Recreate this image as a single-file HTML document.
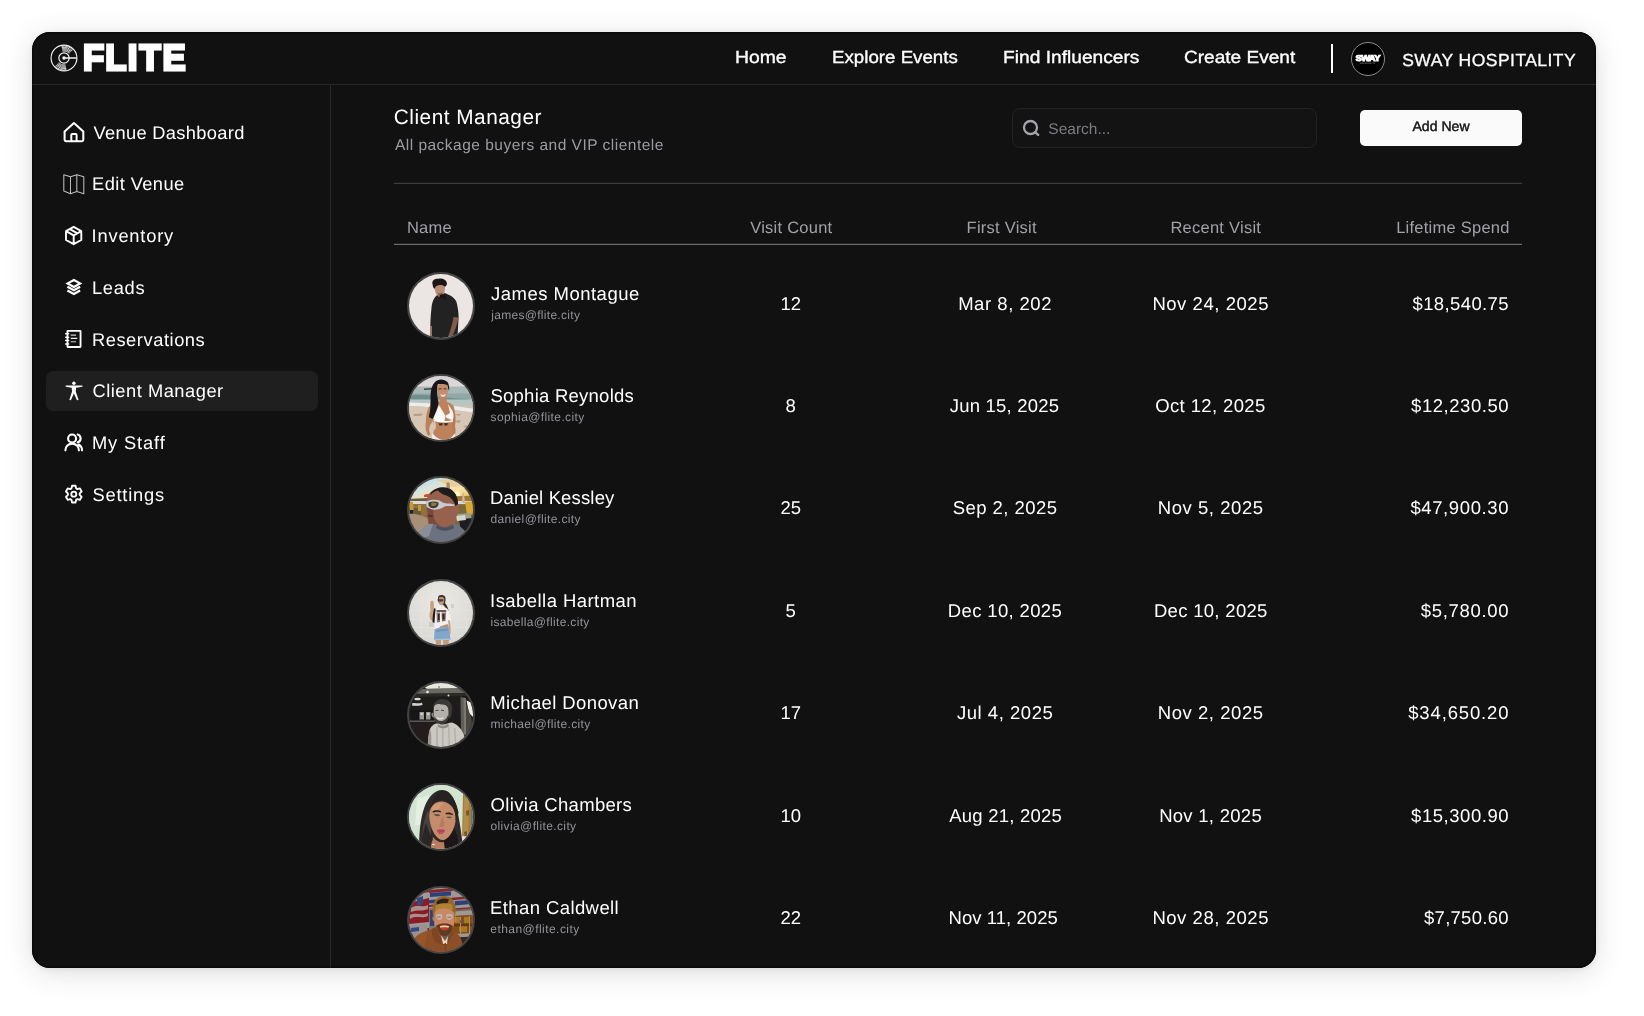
<!DOCTYPE html>
<html lang="en">
<head>
<meta charset="utf-8">
<title>FLITE - Client Manager</title>
<style>
*{box-sizing:border-box;margin:0;padding:0}
html,body{width:1644px;height:1016px;background:#fff;overflow:hidden}
body{font-family:"Liberation Sans",sans-serif;color:#fff;position:relative;text-rendering:geometricPrecision}
.card{will-change:transform;position:absolute;left:32px;top:32px;width:1564px;height:936px;background:#111111;border-radius:18px;box-shadow:0 0 0 1.5px #0a0a0a inset,0 5px 30px rgba(0,0,0,.13),0 1px 7px rgba(0,0,0,.09);overflow:hidden}
.abs{position:absolute;white-space:nowrap}
.hdr{position:absolute;left:0;top:0;width:1564px;height:53px;border-bottom:1px solid #262626}
.nav{position:absolute;top:13.24px;font-size:17.5px;line-height:24px;transform-origin:0 50%;-webkit-text-stroke:.35px #fff;white-space:nowrap}
.vdiv{position:absolute;left:1299px;top:12px;width:2px;height:28.5px;background:#fff}
.orglogo{position:absolute;left:1318.9px;top:9.8px;width:34.3px;height:34.3px;border-radius:50%;background:#000;border:1px solid #8c8c8c;overflow:hidden}
.org{position:absolute;left:1370.2px;top:16.1px;font-size:17.5px;line-height:24px;white-space:nowrap;letter-spacing:.46px;-webkit-text-stroke:.3px #fff}
.side{position:absolute;left:0;top:53px;width:299px;height:883px;border-right:1px solid #282828}
.item{position:absolute;left:13.5px;width:272.5px;height:40.3px;border-radius:7px}
.item.on{background:#1f1f1f}
.item svg{position:absolute;left:16.2px;top:8.15px;width:24px;height:24px}
.item span{position:absolute;left:47.5px;top:8px;font-size:18.3px;line-height:24px;letter-spacing:.45px;white-space:nowrap}
.title{left:361.85px;top:73px;font-size:20.8px;line-height:26px;letter-spacing:.5px}
.sub{left:362.9px;top:104px;font-size:15.5px;line-height:20px;color:#9b9ba3;letter-spacing:.49px}
.rule{position:absolute;left:362px;width:1128px;height:1px}
.r1{top:151px;background:#3c3c3c;box-shadow:0 -1px 0 #1b1b1b}
.r2{top:212px;background:#6a6a6f;box-shadow:0 -1px 0 #262626}
.search{position:absolute;left:979.5px;top:76px;width:305.5px;height:40px;border:1px solid #232323;border-radius:8px;background:#131313}
.search svg{position:absolute;left:8.8px;top:8.9px;width:19px;height:19px}
.search span{position:absolute;left:35.85px;top:11px;font-size:15.5px;line-height:20px;color:#7b7b83;letter-spacing:0}
.btn{position:absolute;left:1328px;top:78px;width:162px;height:36px;border-radius:5px;background:#fafafa;color:#111;text-align:center;font-size:14px;line-height:33.3px;letter-spacing:.05px;-webkit-text-stroke:.45px #111}
.th{top:186px;font-size:16.5px;line-height:20px;color:#a1a1a9;letter-spacing:.25px}
.thc{width:200px;text-align:center}
.row{position:absolute;left:362px;width:1128px;height:102px}
.av{position:absolute;left:13.2px;top:17px;width:68px;height:68px;border-radius:50%;border:2px solid #444;overflow:hidden;background:#333}
.av svg{display:block;width:64px;height:64px}
.nm{left:96.7px;top:26.5px;font-size:18.5px;line-height:24px;letter-spacing:.48px}
.em{left:96.3px;top:51.7px;font-size:12px;line-height:16px;color:#93939b;letter-spacing:.38px}
.c{top:37.1px;font-size:18.5px;line-height:24px;text-align:center}
.c1{left:336.7px;width:120px}
.cl{text-align:left}

</style>
</head>
<body>
<div class="card">
  <div class="hdr">
    <svg class="abs" style="left:16.65px;top:11.05px" width="30" height="30" viewBox="0 0 30 30" fill="none" stroke="#f2f2f2">
      <circle cx="15" cy="15" r="12.9" stroke-width="1.15"/>
      <circle cx="15" cy="15" r="5.15" stroke-width="1.25"/>
      <circle cx="15" cy="15" r="1.75" fill="#fff" stroke="none"/>
      <path d="M15 15H27.9" stroke-width="1.7"/>
      <path stroke-width=".82" stroke="#fff" d="M13.52 8.06A7.1 7.1 0 0 1 20.28 10.25M16.48 21.94A7.1 7.1 0 0 1 9.72 19.75M13.27 6.88A8.3 8.3 0 0 1 21.17 9.45M16.73 23.12A8.3 8.3 0 0 1 8.83 20.55M13.02 5.71A9.5 9.5 0 0 1 22.06 8.64M16.98 24.29A9.5 9.5 0 0 1 7.94 21.36M12.78 4.53A10.7 10.7 0 0 1 22.95 7.84M17.22 25.47A10.7 10.7 0 0 1 7.05 22.16M12.53 3.36A11.9 11.9 0 0 1 23.84 7.04M17.47 26.64A11.9 11.9 0 0 1 6.16 22.96"/>
    </svg>
    <svg class="abs" style="left:48px;top:6px" width="112" height="40" viewBox="0 0 112 40">
      <text text-rendering="geometricPrecision" transform="scale(.99,1.045)" x="3 25.53 48.15 60 83.4" y="30.81" font-family="'Liberation Sans',sans-serif" font-weight="700" font-size="35" fill="#fff" stroke="#fff" stroke-width="2.8" stroke-linejoin="miter">FLITE</text>
    </svg>
    <div class="nav" style="left:703.4px;transform:scaleX(1.106)">Home</div>
    <div class="nav" style="left:800.4px;transform:scaleX(1.069)">Explore Events</div>
    <div class="nav" style="left:971.2px;transform:scaleX(1.096)">Find Influencers</div>
    <div class="nav" style="left:1152.2px;transform:scaleX(1.089)">Create Event</div>
    <div class="vdiv"></div>
    <div class="orglogo"><svg viewBox="0 0 34 34" width="32.3" height="32.3" style="display:block"><text text-rendering="geometricPrecision" transform="scale(1.13,1)" x="14.6" y="19.3" text-anchor="middle" font-family="'Liberation Sans',sans-serif" font-weight="700" font-size="8.800" fill="#fff" stroke="#fff" stroke-width=".95" letter-spacing="-.6">SWAY</text><text x="16.500" y="21.900" text-anchor="middle" font-family="'Liberation Sans',sans-serif" font-weight="700" font-size="2.200" fill="#8a8a8a" letter-spacing=".2">HOSPITALITY</text></svg></div>
    <div class="org">SWAY HOSPITALITY</div>
  </div>
  <div class="side">
    <div class="item" style="top:26.95px"><svg viewBox="0 0 24 24" fill="none" stroke="#fff" stroke-linecap="round" stroke-linejoin="round"><path stroke-width="2.05" d="M2.6 11.55L11.95 3.05L21.3 11.55V19.7a1.45 1.45 0 0 1-1.45 1.45H4.05a1.45 1.45 0 0 1-1.45-1.45Z"/><path stroke-width="2" stroke-linecap="butt" d="M9.3 21.1V15.1a1 1 0 0 1 1-1h3.3a1 1 0 0 1 1 1V21.1"/></svg><span style="top:9.05px;left:48.02px;letter-spacing:0.317px">Venue Dashboard</span></div>
    <div class="item" style="top:78.75px"><svg viewBox="0 0 24 24" fill="none" stroke="#fff" stroke-linecap="round" stroke-linejoin="round"><path stroke="#bdbdbd" stroke-width="1.05" d="M1.8 2.7L8.5 4.8L14.8 2.7L21.8 4.8L21.8 21.8L14.8 19.5L8.5 21.7L1.8 19.0ZM8.5 4.8V21.7M14.8 2.7V19.5"/></svg><span style="top:8.25px;left:46.6px;letter-spacing:0.398px">Edit Venue</span></div>
    <div class="item" style="top:130.45px"><svg viewBox="0 0 24 24" fill="none" stroke="#fff" stroke-linecap="round" stroke-linejoin="round"><path stroke-width="1.9" d="M11.7 2.95L19.3 7.2V16.0L11.7 20.2L4.0 16.0V7.2Z M4.0 7.2L11.7 11.45L19.3 7.2 M11.7 11.45V20.2 M7.85 5.08L15.5 9.32"/></svg><span style="top:8.55px;left:46.11px;letter-spacing:0.794px">Inventory</span></div>
    <div class="item" style="top:182.25px"><svg viewBox="0 0 24 24" fill="none" stroke="#fff" stroke-linecap="round" stroke-linejoin="round"><path stroke-width="2.2" stroke-linejoin="miter" stroke-linecap="butt" d="M11.9 5.0L18.1 8.4L11.9 11.9L5.6 8.4ZM5.4 11.7L11.9 15.2L18.1 11.7M5.4 15.5L11.9 19.0L18.1 15.5"/></svg><span style="top:8.75px;left:46.4px;letter-spacing:0.726px">Leads</span></div>
    <div class="item" style="top:233.95px"><svg viewBox="0 0 24 24" fill="none" stroke="#fff" stroke-linecap="round" stroke-linejoin="round"><rect x="5.45" y="3.8499999999999996" width="13.1" height="16.1" rx=".35" stroke-width="1.85"/><path stroke-width="1.5" d="M3.7 6.85H6.6M3.7 10.2H6.6M3.7 13.6H6.6M3.7 16.95H6.6"/><path stroke-width="1.15" stroke="#cfcfcf" stroke-linecap="butt" d="M8.7 8.1H14.1M8.7 14.75H14.1"/><path stroke-width="1.15" stroke="#fff" stroke-linecap="butt" d="M8.7 11.350000000000001H15.3"/></svg><span style="top:9.05px;left:46.4px;letter-spacing:0.56px">Reservations</span></div>
    <div class="item on" style="top:285.75px"><svg viewBox="0 0 24 24" fill="none" stroke="#fff" stroke-linecap="round" stroke-linejoin="round"><circle cx="11.9" cy="4.3" r="1.7" fill="#fff" stroke="none"/><path fill="#fff" stroke="none" d="M3.7 6.45L20.4 6.45L20.4 7.8L14.1 8.65L13.75 12.6L16.6 21.0L15.0 21.3L11.9 14.6L8.9 21.3L7.3 21.0L10.05 12.6L9.7 8.65L3.7 7.8Z"/></svg><span style="top:8.25px;left:46.97px;letter-spacing:0.518px">Client Manager</span></div>
    <div class="item" style="top:337.45px"><svg viewBox="0 0 24 24" fill="none" stroke="#fff" stroke-linecap="round" stroke-linejoin="round"><circle cx="10.1" cy="7.45" r="4" stroke-width="2.1"/><path stroke-width="2.1" d="M3.4 19.35A6.75 6.75 0 0 1 16.9 19.35M15.64 3.59A4 4 0 0 1 15.64 11.31M16.6 13.5A6.75 6.75 0 0 1 20.0 19.35"/></svg><span style="top:8.55px;left:46.4px;letter-spacing:0.88px">My Staff</span></div>
    <div class="item" style="top:389.25px"><svg viewBox="0 0 24 24" fill="none" stroke="#fff" stroke-linecap="round" stroke-linejoin="round"><path stroke-width="1.9" d="M14.13 6.4L13.51 3.74L10.09 3.74L9.47 6.4L8.21 7.16L5.7 6.4L3.99 9.49L5.88 11.39L5.88 12.91L3.99 14.81L5.7 17.9L8.21 17.14L9.47 17.9L10.09 20.56L13.51 20.56L14.13 17.9L15.39 17.14L17.9 17.9L19.61 14.81L17.72 12.91L17.72 11.39L19.61 9.49L17.9 6.4L15.39 7.16Z"/><circle cx="11.8" cy="12.15" r="2.5" stroke-width="1.9"/></svg><span style="top:8.75px;left:47.07px;letter-spacing:0.781px">Settings</span></div>
  </div>
  <div class="abs title">Client Manager</div>
  <div class="abs sub">All package buyers and VIP clientele</div>
  <div class="search"><svg viewBox="0 0 19 19" fill="none" stroke="#a4a4ae" stroke-linecap="round"><circle cx="9.5" cy="9.5" r="6.5" stroke-width="2.3"/><path stroke-width="2.3" d="M14.3 14.3L17.2 16.9"/></svg><span>Search...</span></div>
  <div class="btn">Add New</div>
  <div class="rule r1"></div>
  <div class="abs th" style="left:374.95px">Name</div>
  <div class="abs th thc" style="left:659.3px">Visit Count</div>
  <div class="abs th thc" style="left:869.7px">First Visit</div>
  <div class="abs th thc" style="left:1083.8px">Recent Visit</div>
  <div class="abs th" style="right:86.3px;text-align:right">Lifetime Spend</div>
  <div class="rule r2"></div>
  <div class="row" style="top:222.65px">
    <div class="av"><svg viewBox="0 0 64 64"><defs><filter id="b1" x="-10%" y="-10%" width="120%" height="120%"><feGaussianBlur stdDeviation=".55"/></filter></defs>
<rect width="64" height="64" fill="#ebe5e3"/>
<g filter="url(#b1)">
<path d="M21.5 64C21 52 21.5 42 22.5 34C23 28 25 23 29 20.5L33 18.5L37 19.5C41 21 46 24 47.5 28C49 34 49.8 40 49.6 43L48.8 58L48 64Z" fill="#222222"/>
<path d="M44.5 43L49.4 43.5C48.6 50 46 56 43 63L39 63C41.5 56 43.5 50 44.5 43Z" fill="#7d5c4a"/>
<path d="M21 52L23 52L23 62L21 62Z" fill="#9a7560"/>
<path d="M25.5 9.5C25 15 26.5 20.5 29.5 22.5C31.5 23.5 34 22 35 19.5C36 17 36.3 13 35.5 9Z" fill="#b88c76"/>
<path d="M28.5 18.5C30 19.5 32 19.3 33.3 18.3L33.5 21L29.5 22.3Z" fill="#8a5f4e"/>
<path d="M23.5 10C22.5 6.5 26 4.2 29.5 4.8C32.5 3.8 36.5 5 37.6 8C38.6 10.5 37 12.8 35.5 12.5C33 10.5 29.5 10.8 27 12.2C26 13.5 25.5 15.5 25 14.5C24 13.5 23.8 11.5 23.5 10Z" fill="#1d1613"/>
<path d="M31 21L33.5 20L37 21.5L36.5 26L33 23.5L30 25Z" fill="#171717"/>
</g></svg></div>
    <div class="abs nm" style="top:27.35px;left:97.01px;letter-spacing:0.485px">James Montague</div><div class="abs em" style="top:52.35px;left:97.19px;letter-spacing:0.302px">james@flite.city</div>
    <div class="abs c c1" style="top:37.35px">12</div><div class="abs c cl" style="top:37.35px;left:564.18px;letter-spacing:0.535px">Mar 8, 202</div><div class="abs c cl" style="top:37.35px;left:758.38px;letter-spacing:0.549px">Nov 24, 2025</div><div class="abs c cl" style="top:37.35px;left:1018.5px;letter-spacing:0.387px">$18,540.75</div>
  </div>
  <div class="row" style="top:325.0px">
    <div class="av"><svg viewBox="0 0 64 64"><defs><filter id="b2" x="-10%" y="-10%" width="120%" height="120%"><feGaussianBlur stdDeviation=".6"/></filter>
<linearGradient id="s2" x1="0" y1="0" x2="0" y2="1"><stop offset="0" stop-color="#cfd0d4"/><stop offset="1" stop-color="#e3d9d8"/></linearGradient></defs>
<rect width="64" height="64" fill="#d3c3b0"/>
<g filter="url(#b2)">
<rect x="-2" y="-2" width="68" height="13" fill="url(#s2)"/>
<rect x="-2" y="10.5" width="68" height="9" fill="#a9b8b8"/>
<rect x="-2" y="17.5" width="68" height="7" fill="#90a8a6"/>
<path d="M-2 19.5C12 17.5 22 20 32 21C44 22.5 54 22 66 25L66 27.5L-2 23.5Z" fill="#6f8f8c"/>
<rect x="-2" y="23.5" width="68" height="6" fill="#b5c6c5"/>
<path d="M-2 26.5C15 26 40 29 66 33L66 37C40 33 15 30 -2 30Z" fill="#e9eeed"/>
<path d="M-2 30C15 30 40 33 66 37L66 66L-2 66Z" fill="#d6c6b3"/>
<path d="M15 12.5L23 12L23 13.5L15 14Z" fill="#3a4544"/>
<path d="M4 38L14 37.5L12 40L5 40ZM44 45L52 44L50 47ZM54 50L60 49L58 52ZM46 38L52 38L50 40Z" fill="#b59f88"/>
<path d="M26 6C29 2.5 35 2.5 38.5 6C40 8 40.5 12 40 15L38 9L29 8C27.5 14 28 22 30 27C28.5 33 27 38 23 43L19.5 41C22 34 22 26 21.5 20C21.5 14 23 9 26 6Z" fill="#16161a"/>
<path d="M28.5 9C31 7.5 36 7.5 38.5 9.5C39.5 13 39 18 37 21C35.5 23 32.5 23.2 30.5 21.5C28.5 18.5 27.8 13 28.5 9Z" fill="#c48c6c"/>
<path d="M29.5 12.5L32.5 12.2L32.5 13.2L29.5 13.5ZM34.5 12.2L37.5 12.6L37.5 13.6L34.5 13.2Z" fill="#4a342c"/>
<path d="M31.5 18.3C33 19.4 35.5 19.1 36.8 17.8L36 20.1C34.8 20.8 33 20.8 32 20.1Z" fill="#f2e6e0"/>
<path d="M30.5 22L37 21L38 26C41 27 44 28.5 45 31C46 35 45.5 40 44.5 44C44.5 48 45 52 45.5 56L46.5 64L23 64L24.5 56C25.5 52 25 48 24 45C20 50 19 54 21.5 58L19.5 60C16.5 56 16 50 17 45C17 38 18.5 32 22 28.5C24.5 26.5 27.5 26.5 30.5 25.5Z" fill="#bd815c"/>
<path d="M44.5 33C47 37 47 44 46 50C47 54 46.5 58 45.5 60L43.5 58C44 52 43 46 43.5 40Z" fill="#b87a56"/>
<path d="M22 18C21.5 26 22 34 19.8 41L23.5 43C26.5 38 28.5 32 29.5 27C28 24 27 20 27.5 16Z" fill="#16161a"/>
<path d="M30 29C28 34 25.5 39 24.5 43C27 45.5 31.5 46 35.5 45L36.5 40Z" fill="#f8f8f8"/>
<path d="M39 28L43.5 35C45 38 44.8 42 43.5 44.5L37 41.5L36.8 39.5L41 37Z" fill="#f4f4f4"/>
<path d="M24.5 43.3C29 45.3 39 45.8 44 44L44 45.5C39 47.3 29 46.8 24.5 44.8Z" fill="#ffffff"/>
<path d="M29.5 47.5L33.8 47L33.2 49.5L30.5 49.5ZM35.2 47L39.5 47.3L38 49.5L35.5 49.5Z" fill="#3d2f2a"/>
<path d="M23.5 57C26 61 30 63 34 64.5L22.5 64.5ZM45.5 57C44 61 40 63 37 64.5L47 64.5Z" fill="#f1ecec"/>
<path d="M25 44C24 47 24.5 51 25.5 55C28 50 27 47 25 44Z" fill="#d6c6b3"/>
</g></svg></div>
    <div class="abs nm" style="top:27.0px;left:96.46px;letter-spacing:0.246px">Sophia Reynolds</div><div class="abs em" style="top:52.0px;left:96.57px;letter-spacing:0.385px">sophia@flite.city</div>
    <div class="abs c c1" style="top:37.0px">8</div><div class="abs c cl" style="top:37.0px;left:555.76px;letter-spacing:0.221px">Jun 15, 2025</div><div class="abs c cl" style="top:37.0px;left:761.22px;letter-spacing:0.375px">Oct 12, 2025</div><div class="abs c cl" style="top:37.0px;left:1017.1px;letter-spacing:0.537px">$12,230.50</div>
  </div>
  <div class="row" style="top:427.35px">
    <div class="av"><svg viewBox="0 0 64 64"><defs><filter id="b3" x="-10%" y="-10%" width="120%" height="120%"><feGaussianBlur stdDeviation=".7"/></filter>
<linearGradient id="s3" x1="0" y1="0" x2="1" y2=".9"><stop offset="0" stop-color="#9fc6e2"/><stop offset=".4" stop-color="#d6e4e2"/><stop offset=".7" stop-color="#f8e2a6"/><stop offset="1" stop-color="#f5bd58"/></linearGradient></defs>
<rect width="64" height="64" fill="#8a6a48"/>
<g filter="url(#b3)">
<rect x="-2" y="-2" width="68" height="24" fill="url(#s3)"/>
<path d="M28 2L40 1L46 4L52 8L44 9L36 6Z" fill="#e9c98a" opacity=".8"/>
<circle cx="48" cy="16.5" r="3.2" fill="#fff3c8"/>
<path d="M-2 21L20 20L40 19L66 18L66 24L-2 25Z" fill="#6b5a3a"/>
<path d="M44 18.5L66 17.5L66 23L44 23Z" fill="#a07a35"/>
<rect x="-2" y="23" width="68" height="4" fill="#d9d9e0"/>
<rect x="-2" y="26" width="68" height="12" fill="#8f7240"/>
<path d="M-2 30L12 30L12 46L-2 46Z" fill="#6a5a3c"/>
<path d="M1 24L4 24L5 36L1 36ZM9 27L12 27L12 33L9 33Z" fill="#c79a2e"/>
<path d="M1 32L4.5 32L4.5 37L1 37Z" fill="#1f2230"/>
<path d="M-2 36C8 35 14 38 22 42L18 52L-2 56Z" fill="#a89078"/>
<path d="M46 28L66 26L66 50L46 46Z" fill="#7a6a3a"/>
<path d="M56 24L66 23L66 36L58 37Z" fill="#d9a830"/>
<path d="M48 36L62 35L62 42L48 43Z" fill="#9aa08a"/>
<path d="M50 41L66 40L66 56L52 54Z" fill="#1c1d22"/>
<path d="M47 38L56 37L57 42L48 43Z" fill="#d8d4cc"/>
<path d="M37.5 4.5L40.5 4.5L41 11L37.5 11Z" fill="#a08868"/>
<path d="M53.5 15L55 15L56 25L53 25Z" fill="#c9b9a0"/>
<path d="M15 17C17 15.5 20 15.5 21 17L20 19L15 19Z" fill="#e0483a"/>
<path d="M20 16C24 10.5 32 8.5 39 10.5C45 12.5 48.5 18 49 25C49.5 31 48 37 46.5 42C45.5 46 44.5 49 44 52L26 54C22 52 20 49 19.5 45L17.5 36C16.5 34 16.5 31 17.5 29C17 24 18 19 20 16Z" fill="#96624d"/>
<path d="M18 30C19 28 22 28 24 30L25 40C26 44 30 48 35 50L44 46L44 54L27 55C22 52 20 48 19.5 44Z" fill="#7a4c3c"/>
<path d="M46 27C49 26 50.5 29 50 33C49.5 36 48 38.5 46 38Z" fill="#9a6450"/>
<path d="M21.5 15C26 9.5 34 8 40 10.5C46 13 49 19 49 26L46.5 28C45 23 42 19 37.5 17.5C34 17 31.5 15 29 12.5C26 13 23.5 14.5 21.5 17Z" fill="#1f1a1c"/>
<path d="M17 23.5C21 21.5 27 21 30.5 22.5C33 25 37 25.5 41 25.5L45.5 26.5L45.5 28L37 28C34 29 31 31.5 28 31.5C24 32 19.5 31 17.5 28.5Z" fill="#c9c9cf"/>
<path d="M19.5 24.5C22.5 23 27 23 29.5 24.5C30 27 28.5 29.5 26 30C23 30.5 20.5 29.5 19.5 27.5Z" fill="#3b3a30"/>
<path d="M22 25C24 24.3 26.5 24.5 28 25.5L26 28L22.5 28Z" fill="#8a7a3a"/>
<path d="M18.5 36.5L23 37L24.5 39L19 39Z" fill="#5a3328"/>
<path d="M12 52C18 46 26 44.5 30 48C34 50 40 50 45 45.5C50 47 56 52 60 58L60 66L4 66Z" fill="#6c7280"/>
<path d="M28 47C31 49.5 38 50.5 44 47L45 50C39 54 31 53 27 50Z" fill="#4c515e"/>
<path d="M10 54C14 48 20 45 24 46L20 58L8 62Z" fill="#8a8e9a"/>
</g></svg></div>
    <div class="abs nm" style="top:26.65px;left:95.98px;letter-spacing:0.153px">Daniel Kessley</div><div class="abs em" style="top:51.65px;left:96.4px;letter-spacing:0.369px">daniel@flite.city</div>
    <div class="abs c c1" style="top:36.65px">25</div><div class="abs c cl" style="top:36.65px;left:558.76px;letter-spacing:0.454px">Sep 2, 2025</div><div class="abs c cl" style="top:36.65px;left:763.78px;letter-spacing:0.553px">Nov 5, 2025</div><div class="abs c cl" style="top:36.65px;left:1016.4px;letter-spacing:0.615px">$47,900.30</div>
  </div>
  <div class="row" style="top:529.7px">
    <div class="av"><svg viewBox="0 0 64 64"><defs><filter id="b4" x="-10%" y="-10%" width="120%" height="120%"><feGaussianBlur stdDeviation=".5"/></filter>
<radialGradient id="g4" cx=".5" cy=".35" r=".75"><stop offset="0" stop-color="#eceae6"/><stop offset="1" stop-color="#d6d4cf"/></radialGradient></defs>
<rect width="64" height="64" fill="url(#g4)"/>
<g filter="url(#b4)">
<path d="M0 12.5H64M0 21H64M0 29.500H64M0 38H64M0 46.500H64M0 55H64M12 0V64M38.500 0V64M57 0V64M25 0V64" stroke="#e6e4e0" stroke-width=".7" fill="none" opacity=".9"/>
<path d="M42 23L45 23L45 27L42 27Z" fill="#d2d0cb"/>
<path d="M20 41L25 41L25 46L20 46Z" fill="#cfcdc8"/>
<path d="M29.500 15C31 13.500 34.500 13.500 36 15.500C37 17.500 36.500 20 36 22C38 24 39.500 28 40.500 33L39 33.500C38 30 36.500 26.500 35 24.500L30.500 23C29 21 28.500 17.500 29.500 15Z" fill="#3d2e25"/>
<path d="M30 16.500C31.500 15.500 34 15.800 35 17C35.500 19.500 35 22.500 33.500 24C32 24.500 30.500 23.500 30 22Z" fill="#c59878"/>
<path d="M28.500 18L34.500 18.300L34.300 20.300L31 20.800L28.800 20Z" fill="#3e4548"/>
<path d="M21.500 20.500C22.500 19 24.500 19.500 24.800 21.500L25 27L26.500 29.500L24.500 34C23.500 38 24.500 39.500 25 39.500L22 39.500C20 37 20 33 21.500 29C21 26 21 23 21.500 20.500Z" fill="#c9a083"/>
<path d="M27 27C30 25.500 35 25.500 38 27.500C40 29 41.500 33 42 39.500L38.500 40L38.500 44L32 46L26 48.500L25.500 42C25 36 25.500 31 27 27Z" fill="#f2f0ee"/>
<path d="M27.500 29L37 29L37.500 31L27.500 31Z" fill="#6a5a55"/>
<path d="M27.500 31.500L31 31.500L31 41L28 41.500ZM32.500 31.500L37 31.500L36.500 40L33 40.500Z" fill="#8a6e66"/>
<path d="M29 33L30.500 33L30.500 39L29 39ZM33.500 33L35.500 33L35.500 38.500L33.500 38.500Z" fill="#2e2624"/>
<path d="M25.200 27.500C26 27 26.800 27.500 26.500 29C26 33 25.800 38 25.500 42L23.500 41C23.500 36 24 31 25.200 27.500Z" fill="#1d1d1f"/>
<path d="M31 45.500L38.500 43L39.500 46L30 48.500Z" fill="#b98d6d"/>
<path d="M25.500 48.500C29 46.500 35 45.500 40 46L41.500 58.500L25 59Z" fill="#84a6c9"/>
<path d="M27 49L39 47.500L39.300 49.500L27 51Z" fill="#6f93b8"/>
<path d="M25.500 58L41.500 57.500L41.600 59L25.300 59.500Z" fill="#a9c3dc"/>
<path d="M26.500 59L32 59L32 66L27.500 66ZM34 59L40 59L39 66L34.500 66Z" fill="#c49a7c"/>
<path d="M40.500 39C41.500 43 42 48 41.500 53L40 53C40 48 39.500 43 39 39.500Z" fill="#c9a083"/>
</g></svg></div>
    <div class="abs nm" style="top:27.3px;left:96.09px;letter-spacing:0.444px">Isabella Hartman</div><div class="abs em" style="top:52.3px;left:96.5px;letter-spacing:0.33px">isabella@flite.city</div>
    <div class="abs c c1" style="top:37.3px">5</div><div class="abs c cl" style="top:37.3px;left:553.78px;letter-spacing:0.358px">Dec 10, 2025</div><div class="abs c cl" style="top:37.3px;left:759.88px;letter-spacing:0.313px">Dec 10, 2025</div><div class="abs c cl" style="top:37.3px;left:1026.8px;letter-spacing:0.677px">$5,780.00</div>
  </div>
  <div class="row" style="top:632.05px">
    <div class="av"><svg viewBox="0 0 64 64"><defs><filter id="b5" x="-10%" y="-10%" width="120%" height="120%"><feGaussianBlur stdDeviation=".7"/></filter></defs>
<rect width="64" height="64" fill="#1d1c1b"/>
<g filter="url(#b5)">
<path d="M10 0L54 0L50 5.500L18 6Z" fill="#e9e6e0"/>
<path d="M6 6L56 5L58 10L4 11Z" fill="#6a6762"/>
<path d="M0 11L60 10L60 13L0 14Z" fill="#2a2928"/>
<circle cx="18.500" cy="9" r="1.300" fill="#f5f2ec"/><circle cx="39.500" cy="12.500" r="1" fill="#dedbd5"/><circle cx="30" cy="4" r=".8" fill="#555"/>
<ellipse cx="8.500" cy="16" rx="3.200" ry="1.300" fill="#dcd9d3"/>
<path d="M3 20.500C6 19 9 21.500 13 19.500L13.500 22C10 23.500 6 22 3.500 23Z" fill="#d6d3cd"/>
<path d="M2 27L24 27L24 37L2 37Z" fill="#151515"/>
<path d="M10.500 29L15 29L15 36.500L10.500 36.500ZM17 29L21.500 29L21.500 36.500L17 36.500Z" fill="#9b9892"/>
<path d="M11.500 30L14 30L14 32L11.500 32ZM18 30L20.500 30L20.500 32L18 32Z" fill="#d0cdc7"/>
<path d="M0 37.500L26 37.500L26 39L0 39Z" fill="#5a5753"/>
<path d="M0 39L27 39L24 64L0 64Z" fill="#201f1e"/>
<path d="M51.500 14L57 15L57 52L52 50Z" fill="#5e5b56"/>
<path d="M54.500 15L57 15.500L57 52L55 51Z" fill="#7a7670"/>
<path d="M57.500 17.500L62 19.500L66 36L60 30Z" fill="#f1eee8"/>
<path d="M57 20L62 34L64 46L57 52Z" fill="#4a4743"/>
<path d="M24.500 22C26 17.500 31 15.500 36 16.500C40 17 42.500 20 43 24C43.500 28 42.500 32 41.500 35L25.500 32C24.500 29 24 25 24.500 22Z" fill="#3b3836"/>
<path d="M25 24C26 21 29 20.500 32 21.500C35 21 38 22 39 25C40 29 39.500 34 38 37.500C36 40.500 32 41.500 29 40.500C26.500 39 25 35 24.500 31Z" fill="#b3afa9"/>
<path d="M25.500 33C27 37 30 38.500 33 38C36 37.500 38 35 39 32L39.500 35C38.500 39 35.500 41.500 32 41.500C28.500 41.500 26 38.500 25.500 35Z" fill="#3e3b38"/>
<path d="M27.500 34C29.500 35.500 32.500 35.500 34.500 34L34 35.800C32 37 29.500 36.800 28 35.500Z" fill="#e4e1db"/>
<path d="M26.500 27L29.500 26.800L29.500 27.800L26.500 28ZM32 26.800L35 27L35 28L32 27.800Z" fill="#4a4642"/>
<path d="M24 30C22.500 29 22 31.500 23 33.500L25 35Z" fill="#8a8680"/>
<path d="M21 46C23 41 28 39 32 41.500C36 42 40 39.500 43 39.500C48 41 53 46 55.500 53L56 66L19 66C18.500 58 19.500 51 21 46Z" fill="#cbc8c2"/>
<path d="M29.500 41C31.500 43.500 36 43.500 39 40.500L40 43C36.500 46.500 31 46 28.500 43Z" fill="#8f8b85"/>
<path d="M27 44L29 44L29 64L27 64ZM33 45L34.500 45L34.500 64L33 64ZM39 44L40.500 44L41 64L39.500 64ZM45 45L46.500 45L47.500 64L46 64Z" fill="#b4b1ab"/>
<path d="M21 46C22.500 49 22.500 56 22 64L19 64C18.500 58 19.500 51 21 46Z" fill="#9a9791"/>
</g></svg></div>
    <div class="abs nm" style="top:26.95px;left:96.28px;letter-spacing:0.391px">Michael Donovan</div><div class="abs em" style="top:51.95px;left:96.5px;letter-spacing:0.369px">michael@flite.city</div>
    <div class="abs c c1" style="top:36.95px">17</div><div class="abs c cl" style="top:36.95px;left:562.91px;letter-spacing:0.535px">Jul 4, 2025</div><div class="abs c cl" style="top:36.95px;left:763.78px;letter-spacing:0.553px">Nov 2, 2025</div><div class="abs c cl" style="top:36.95px;left:1014.2px;letter-spacing:0.859px">$34,650.20</div>
  </div>
  <div class="row" style="top:734.4px">
    <div class="av"><svg viewBox="0 0 64 64"><defs><filter id="b6" x="-10%" y="-10%" width="120%" height="120%"><feGaussianBlur stdDeviation=".75"/></filter></defs>
<rect width="64" height="64" fill="#d0e3cf"/>
<g filter="url(#b6)">
<path d="M0 0L64 0L64 64L0 64Z" fill="#d2e5d1"/>
<path d="M8 14L20 10L18 40L6 40Z" fill="#e4efe2"/>
<path d="M54 8L66 10L66 58L53 56Z" fill="#a27c3e"/>
<path d="M55 12L60 13L59 54L54 53Z" fill="#b48d4c"/>
<path d="M57 26L60 25L60 30L57.500 31ZM55 47L58 46L58 51L55.500 51Z" fill="#7a5628"/>
<path d="M62 20L66 20L66 50L62 50Z" fill="#5e7a66"/>
<path d="M47 50L60 52L58 64L46 64Z" fill="#e8dcdf"/>
<path d="M10 66C10 50 11 34 15.500 22C19 12 26 5 33 5C40 5 44.500 11 47 20C50 31 52 46 53.500 58L52 66Z" fill="#2e2a29"/>
<path d="M12 66C12 52 14 38 18 27L24 22L22 48L20 66Z" fill="#474240"/>
<path d="M20.500 27C22 20 27 16 33 16.500C39 17 44 21 46 27.500C47.500 33 46.500 39 44.500 44C42.500 49 39 53.500 35 55C31.500 55.500 28 53 25.500 49C22 43.500 19.500 34 20.500 27Z" fill="#c48c6b"/>
<path d="M22 24C25 19 30 17 34 18C33 21 30 24 26.500 25.500Z" fill="#d29a78"/>
<path d="M33 5.500C28 8 24 14 22 22L20 30C21 22 25 17 30 15.500C34 14.500 39 16.500 42.500 20C45.500 24 47 30 46.500 36L49.500 28C48 17 42 7 33 5.500Z" fill="#262222"/>
<path d="M23.500 26.500C26 24.800 29.500 24.800 32 26.300L31.800 27.600C29.500 26.500 26.500 26.600 24 27.800ZM36.500 28C39 27 42 27.500 44 29L43.600 30.200C41.500 29.200 39 29 36.800 29.500Z" fill="#2a1f1c"/>
<path d="M24.500 29.800C26.500 28.800 29.500 28.800 31.500 30.300C29.500 31.600 26.500 31.500 24.500 29.800ZM37 32C39 31 41.500 31.300 43.300 32.600C41.500 33.800 39 33.600 37 32Z" fill="#54564a"/>
<path d="M33.500 31C34.500 35 35.500 38.500 35.500 41C34 42.500 31.500 42.500 30 41.500C31.500 38 32.500 34.500 33.500 31Z" fill="#b67c5d"/>
<path d="M28 45C30.500 43.500 33.500 43.800 36 45.200C35.500 48 33 49.800 30.500 49.200C28.800 48.500 28 46.800 28 45Z" fill="#c0506a"/>
<path d="M28 45.500C30.500 46.500 33.500 46.500 36 45.500" stroke="#8a3048" stroke-width=".6" fill="none"/>
<path d="M24 52C27 56 31 58 35 57L37 66L20 66C20 61 21.500 56 24 52Z" fill="#b87e5e"/>
<path d="M35 56C39 54 43 49 45 43C48 48 50 56 50 66L36 66Z" fill="#1c1919"/>
<path d="M12 66C12 56 14 46 17 38C19 44 21 50 24 54C22 58 21.500 62 21.500 66Z" fill="#2a2625"/>
<ellipse cx="24.500" cy="59.500" rx="1.300" ry=".8" fill="#e8ecf0"/>
</g></svg></div>
    <div class="abs nm" style="top:26.6px;left:96.62px;letter-spacing:0.322px">Olivia Chambers</div><div class="abs em" style="top:51.6px;left:96.4px;letter-spacing:0.387px">olivia@flite.city</div>
    <div class="abs c c1" style="top:37.6px">10</div><div class="abs c cl" style="top:37.6px;left:555.26px;letter-spacing:0.222px">Aug 21, 2025</div><div class="abs c cl" style="top:37.6px;left:765.18px;letter-spacing:0.273px">Nov 1, 2025</div><div class="abs c cl" style="top:37.6px;left:1017.1px;letter-spacing:0.537px">$15,300.90</div>
  </div>
  <div class="row" style="top:836.75px">
    <div class="av"><svg viewBox="0 0 64 64"><defs><filter id="b7" x="-10%" y="-10%" width="120%" height="120%"><feGaussianBlur stdDeviation=".7"/></filter></defs>
<rect width="64" height="64" fill="#8a7f80"/>
<g filter="url(#b7)">
<path d="M0 0L20 0L20 48L0 52Z" fill="#b8242a"/>
<path d="M0 8L20 4L20 10L0 15ZM0 36L20 34L20 40L0 42Z" fill="#d9d5d6"/>
<path d="M2 20C8 16 14 20 19 17L19 21C13 24 8 21 2 24ZM1 27C7 24 14 28 19 25L19 28C13 31 7 27 1 31Z" fill="#e9c4c4"/>
<path d="M8 10L14 8L14 16L8 18Z" fill="#3f5fae"/>
<path d="M0 38L18 36L19 48L0 52Z" fill="#cfcacb"/>
<path d="M2 40L10 39L10 43L2 44Z" fill="#3c62b8"/>
<path d="M20 0L64 0L64 24L20 26Z" fill="#d6d2d3"/>
<path d="M20 2L44 0L44 3L20 5ZM40 10L62 8L62 10.500L40 12.500ZM20 17L30 16L30 18L20 19ZM44 20.500L64 19L64 21L44 22.500Z" fill="#b43038"/>
<path d="M21 5L42 3.500L42 7.500L21 9ZM46 13L62 12L62 16L46 17.500ZM20 12L28 11.500L28 15L20 15.500Z" fill="#3857a8"/>
<path d="M20 20L30 19.500L30 48L20 48Z" fill="#a9a5a8"/>
<path d="M21 22L25 22L25 38L21 38Z" fill="#3a55a0"/>
<path d="M44 22L66 20L66 28L44 29Z" fill="#9a8e80"/>
<path d="M46 23.500L66 22L66 26.500L46 28Z" fill="#d9d4c8"/>
<path d="M42 28L66 27L66 46L42 47Z" fill="#b8681c"/>
<path d="M46 29L52 29L52 35L46 35ZM55 29L61 29L61 35L55 35ZM50 37L58 37L58 44L50 44Z" fill="#e8a62e"/>
<path d="M44 36L66 35.500L66 38L44 38.500Z" fill="#8a4a14"/>
<path d="M51 29L52 29L52 46L51 46ZM60 28L61 28L61 46L60 46Z" fill="#d8c9a8"/>
<circle cx="52" cy="33.500" r="1.200" fill="#8a4fd0"/>
<path d="M44 46L66 45L66 48.500L44 49.500Z" fill="#d9d3c8"/>
<path d="M46 49.500L66 48.500L66 64L46 64Z" fill="#3a2f2a"/>
<rect x="-2" y="-2" width="68" height="68" fill="#1c100c" opacity=".3"/>
<path d="M23.500 22C23 14 28 8.500 34.500 8C41 7.500 46 12 46.500 19C47 22 46.500 25 46 27L24 28Z" fill="#94682c"/>
<path d="M27.500 14C30 10.500 36 9.500 40 11.500L38 16L28 18Z" fill="#2e2018"/>
<path d="M27 17C31 15 38 14.500 43 16.500L44 22L26 23Z" fill="#b08236"/>
<path d="M25.500 25C27 21.500 31 20.500 35 20.500C39.500 20.500 43.500 22 45 25.500C46 30 45.500 36 44 40C42.500 44 39 47 35.500 47C31.500 47 28.500 44 27 40C25.500 36 25 30 25.500 25Z" fill="#cc8864"/>
<path d="M24.500 28C23.500 27.500 23 30 24 32.500L25.500 33.500ZM46 28.500C47.500 28 48 31 46.800 33.500L45.500 34Z" fill="#c57f5c"/>
<path d="M26.500 27C27 25 33 24.500 34 27C34.500 30 33 32.500 30.500 32.500C28 32.500 26.500 30 26.500 27ZM36.500 27C37 24.500 43.500 25 44 27.500C44.500 30.500 42.500 32.500 40.300 32.500C38 32.500 36.500 30 36.500 27Z" fill="#d9a98c" stroke="#9a8a7c" stroke-width=".7"/>
<path d="M28 28.500L31.500 28.300L31.500 29.500L28 29.700ZM38.500 28.500L42 28.700L42 29.900L38.500 29.700Z" fill="#6a8aa0"/>
<path d="M27 38C29 36 32.500 35.500 35.500 35.500C38.500 35.500 42 36 44 38.500C43.500 42.500 41 46.500 37 48C34 48.500 31 47.500 29 45C27.800 43 27 40.500 27 38Z" fill="#5e3a24"/>
<path d="M30.500 38C33 36.800 38 36.800 40.500 38.200C40 41 38 42.500 35.500 42.500C33 42.500 31 41 30.500 38Z" fill="#c23a2e"/>
<path d="M31 38C33.500 37.200 37.500 37.200 40 38.300L39.500 39.800C37 39.200 34 39.200 31.500 39.800Z" fill="#f0d9a0"/>
<path d="M4 52C8 46 16 43 22 41.500L28 38.500L31 46L36 52L42 46L45 44C49 45.500 52 49 53 54L54 66L2 66Z" fill="#8c4f27"/>
<path d="M24 40C22 44 23 50 27 54L36 58L41 52L44.500 45L42.500 44.500C41 48 39 51 36 53C32 51 29 47 28.500 41Z" fill="#7d4520"/>
<path d="M32 47L36 53L39 48L38 56L34 56Z" fill="#e8d5c0"/>
<path d="M35.500 55L37 55L37.500 66L35.500 66Z" fill="#7d4520"/>
<path d="M4 52C8 47 14 44.500 19 43L14 66L2 66Z" fill="#96572b"/>
</g></svg></div>
    <div class="abs nm" style="top:27.25px;left:95.98px;letter-spacing:0.412px">Ethan Caldwell</div><div class="abs em" style="top:52.25px;left:96.29px;letter-spacing:0.448px">ethan@flite.city</div>
    <div class="abs c c1" style="top:37.25px">22</div><div class="abs c cl" style="top:37.25px;left:554.53px;letter-spacing:0.054px">Nov 11, 2025</div><div class="abs c cl" style="top:37.25px;left:758.38px;letter-spacing:0.549px">Nov 28, 2025</div><div class="abs c cl" style="top:37.25px;left:1030.0px;letter-spacing:0.277px">$7,750.60</div>
  </div>
</div>
</body>
</html>
